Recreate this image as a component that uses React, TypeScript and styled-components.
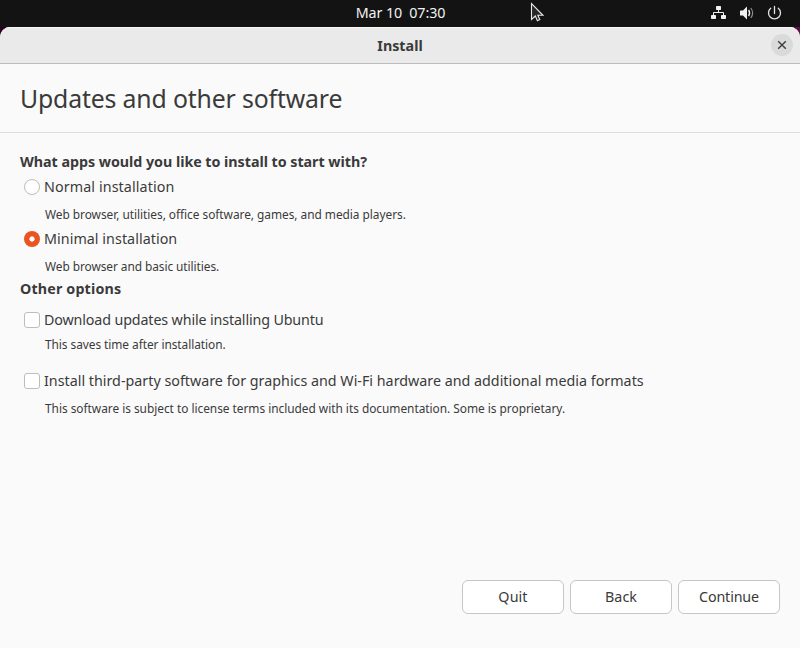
import React from "react";
import styled, { createGlobalStyle } from "styled-components";

const GlobalStyle = createGlobalStyle`
  * { box-sizing: border-box; }
  body {
    margin: 0;
    font-family: "Noto Sans", "Open Sans", sans-serif;
    font-size: 14.3px;
    color: #3a3a3a;
    overflow: hidden;
  }
`;

const Desktop = styled.div`
  width: 800px;
  height: 648px;
  display: flex;
  flex-direction: column;
  background: linear-gradient(90deg, #2d0022, #5c1146);
`;

const TopBar = styled.header`
  position: relative;
  height: 27px;
  flex: none;
  display: grid;
  grid-template-columns: 1fr auto 1fr;
  align-items: center;
  background: #131313;
  color: #f2f2f2;
`;

const Clock = styled.time`
  grid-column: 2;
  padding-left: 1px;
  line-height: 26px;
  height: 27px;
  white-space: pre;
  letter-spacing: -0.1px;
`;

const Tray = styled.div`
  display: flex;
  justify-content: flex-end;
  gap: 12px;
  padding-right: 17px;

  svg { display: block; margin-top: -1px; }
`;

const Pointer = styled.svg`
  position: absolute;
  left: 530px;
  top: 2px;
`;

const Window = styled.main`
  flex: 1;
  display: flex;
  flex-direction: column;
  background: #fafafa;
  border-radius: 10px 10px 0 0;
  overflow: hidden;
`;

const TitleBar = styled.div`
  height: 37px;
  flex: none;
  display: grid;
  grid-template-columns: 1fr auto 1fr;
  align-items: center;
  background: #eaeaea;
  border-bottom: 1px solid #bdbdbd;
  box-shadow: inset 0 1px #f8f8f8;
`;

const WindowTitle = styled.span`
  grid-column: 2;
  font-weight: 700;
  letter-spacing: 0;
  line-height: 20px;
  padding-top: 1px;
`;

const CloseButton = styled.button`
  justify-self: end;
  width: 22px;
  height: 22px;
  margin-right: 7px;
  padding: 0;
  border: 0;
  border-radius: 50%;
  background: #dadada;
  display: grid;
  place-items: center;
`;

const PageHeader = styled.div`
  height: 69px;
  flex: none;
  padding: 17px 20px 0;
  border-bottom: 1px solid #dedede;
`;

const PageTitle = styled.h1`
  margin: 0;
  font-size: 24.8px;
  font-weight: 400;
  line-height: 34px;
  letter-spacing: -0.15px;
`;

const Form = styled.div`
  flex: 1;
  padding: 19px 20px 0;
`;

const SectionTitle = styled.h2<{ $spacing?: number }>`
  margin: 0;
  font-size: 14.3px;
  font-weight: 700;
  line-height: 20px;
  letter-spacing: ${(p) => p.$spacing ?? 0}px;
`;

const Choice = styled.label<{ $gap: number; $spacing: number }>`
  display: flex;
  align-items: center;
  gap: 4px;
  height: 20px;
  margin-top: ${(p) => p.$gap}px;
  padding-left: 4px;
  line-height: 20px;
  white-space: nowrap;
  letter-spacing: ${(p) => p.$spacing}px;
`;

const Hint = styled.p<{ $gap?: number; $spacing: number }>`
  margin: ${(p) => p.$gap ?? 9}px 0 0 25px;
  font-size: 11.9px;
  line-height: 16px;
  white-space: nowrap;
  letter-spacing: ${(p) => p.$spacing}px;
`;

const OptionsTitle = styled(SectionTitle)`
  margin-top: 5px;
`;

const Radio = styled.span<{ $checked?: boolean }>`
  width: 16px;
  height: 16px;
  border-radius: 50%;
  border: ${(p) => (p.$checked ? "0" : "1px solid #bdbdbd")};
  background: ${(p) =>
    p.$checked ? "radial-gradient(circle, #fff 2.2px, #e95420 3px)" : "#fff"};
`;

const Checkbox = styled.span`
  width: 16px;
  height: 16px;
  border: 1px solid #bdbdbd;
  border-radius: 3px;
  background: #fff;
`;

const Actions = styled.footer`
  display: flex;
  justify-content: flex-end;
  gap: 6px;
  padding: 0 20px 34px;
`;

const Button = styled.button<{ $spacing: number }>`
  width: 102px;
  height: 34px;
  padding: 0 0 1px;
  border: 1px solid #c6c6c6;
  border-radius: 6px;
  background: #fff;
  color: inherit;
  font: inherit;
  line-height: 20px;
  letter-spacing: ${(p) => p.$spacing}px;
`;

const NetworkIcon = () => (
  <svg width="16" height="16" viewBox="0 0 16 16" fill="#f2f2f2">
    <rect x="5" y="1" width="5" height="4" rx=".7" />
    <rect x="0" y="10" width="5" height="4" rx=".7" />
    <rect x="10" y="10" width="5" height="4" rx=".7" />
    <path d="M7.5 5v3M2.5 10.5V7.5h10v3" fill="none" stroke="#f2f2f2" />
  </svg>
);

const VolumeIcon = () => (
  <svg width="16" height="16" viewBox="0 0 16 16" fill="none">
    <path d="M1.5 5.5H4L8 1.5v13L4 10.5H1.5Q1 10.5 1 10V6q0-.5.5-.5Z" fill="#f2f2f2" />
    <path d="M9.6 5q2 3 0 6" stroke="#f2f2f2" strokeWidth="1.4" />
    <path d="M11.8 3q3.7 5 0 10" stroke="#8c8c8c" strokeWidth="1.2" />
  </svg>
);

const PowerIcon = () => (
  <svg width="16" height="16" viewBox="0 0 16 16" fill="none" stroke="#e4e4e4" strokeWidth="1.3" strokeLinecap="round">
    <path d="M7.5 1.5v7M3.7 3.2a6 6 0 1 0 7.6 0" />
  </svg>
);

export default function App() {
  return (
    <Desktop>
      <GlobalStyle />
      <TopBar>
        <Clock>{"Mar 10\u00a0 07:30"}</Clock>
        <Tray>
          <NetworkIcon />
          <VolumeIcon />
          <PowerIcon />
        </Tray>
        <Pointer width="15" height="22" viewBox="0 0 15 22">
          <path
            d="M1.5 1.5v16l3.8-3.5 2.1 4.7 2.4-1.1-2-4.3H13Z"
            fill="#292929"
            stroke="#e8e8e8"
            strokeWidth="1.1"
          />
        </Pointer>
      </TopBar>
      <Window>
        <TitleBar>
          <WindowTitle>Install</WindowTitle>
          <CloseButton aria-label="Close">
            <svg width="10" height="10" viewBox="0 0 10 10" stroke="#3d3d3d" strokeWidth="1.4">
              <path d="M1.2 1.2l7.6 7.6M8.8 1.2L1.2 8.8" />
            </svg>
          </CloseButton>
        </TitleBar>
        <PageHeader>
          <PageTitle>Updates and other software</PageTitle>
        </PageHeader>
        <Form>
          <SectionTitle $spacing={-0.04}>What apps would you like to install to start with?</SectionTitle>
          <Choice $gap={5} $spacing={0.1}>
            <Radio />
            Normal installation
          </Choice>
          <Hint $spacing={-0.04}>
            Web browser, utilities, office software, games, and media players.
          </Hint>
          <Choice $gap={7} $spacing={0.05}>
            <Radio $checked />
            Minimal installation
          </Choice>
          <Hint $spacing={-0.07}>Web browser and basic utilities.</Hint>
          <OptionsTitle $spacing={0.15}>Other options</OptionsTitle>
          <Choice $gap={11} $spacing={-0.14}>
            <Checkbox />
            Download updates while installing Ubuntu
          </Choice>
          <Hint $gap={6} $spacing={-0.06}>This saves time after installation.</Hint>
          <Choice $gap={19} $spacing={0}>
            <Checkbox />
            Install third-party software for graphics and Wi-Fi hardware and additional media formats
          </Choice>
          <Hint $spacing={-0.03}>
            This software is subject to license terms included with its documentation. Some is proprietary.
          </Hint>
        </Form>
        <Actions>
          <Button $spacing={0.1}>Quit</Button>
          <Button $spacing={0.1}>Back</Button>
          <Button $spacing={-0.15}>Continue</Button>
        </Actions>
      </Window>
    </Desktop>
  );
}
